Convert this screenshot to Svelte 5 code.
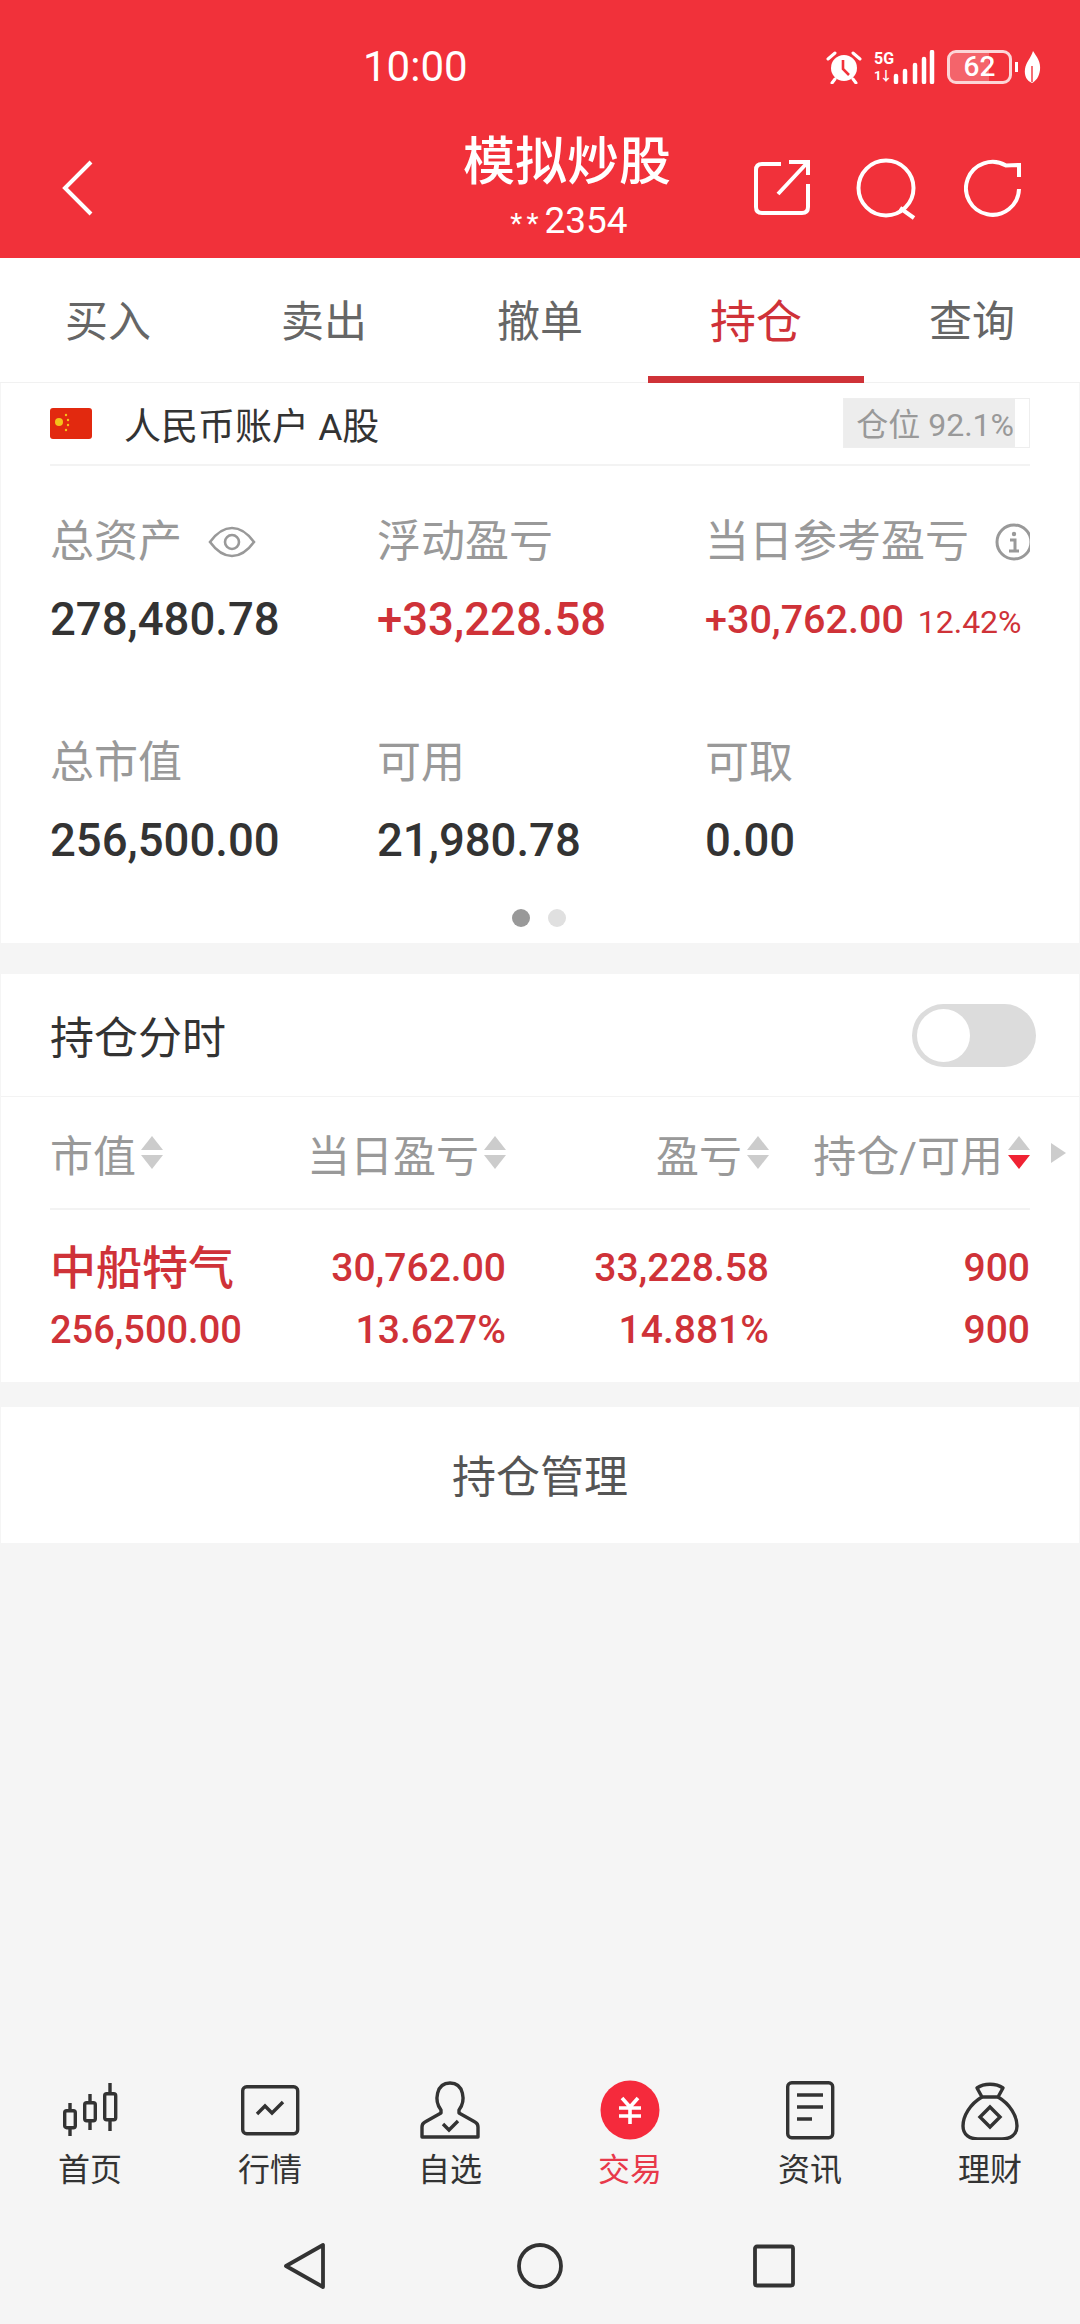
<script lang="ts">
  const tabs = ['买入', '卖出', '撤单', '持仓', '查询'];
  const activeTab = '持仓';
  const summary = [
    { label: '总资产', value: '278,480.78', eye: true },
    { label: '浮动盈亏', value: '+33,228.58', red: true },
    { label: '当日参考盈亏', value: '+30,762.00', extra: '12.42%', red: true, info: true, small: true },
    { label: '总市值', value: '256,500.00' },
    { label: '可用', value: '21,980.78' },
    { label: '可取', value: '0.00' },
  ];
  const columns = [
    { label: '市值', align: 'left' },
    { label: '当日盈亏', align: 'right' },
    { label: '盈亏', align: 'right' },
    { label: '持仓/可用', align: 'right', sorted: true },
  ];
  const nav = ['首页', '行情', '自选', '交易', '资讯', '理财'];
  const activeNav = '交易';
</script>

<div class="page">
  <header class="top">
    <div class="status">
      <span class="time">10:00</span>
      <div class="status-icons">
        <svg class="alarm" width="36" height="34" viewBox="0 0 36 34">
          <circle cx="18" cy="18" r="13" fill="#fff" />
          <path d="M17 10v9l6 6" fill="none" stroke="#f1313a" stroke-width="2.6" />
          <path d="M2 9l7-6M34 9l-7-6M9 29l-3 4M27 29l3 4" stroke="#fff" stroke-width="3" stroke-linecap="round" />
        </svg>
        <div class="net">
          <span class="net-5g">5G</span>
          <span class="net-arrows">1↓</span>
        </div>
        <svg class="bars" width="42" height="34" viewBox="0 0 42 34">
          <path d="M3 26v6M12 21v11M22 15v17M31 9v23M39 2v30" stroke="#fff" stroke-width="4.5" stroke-linecap="round" />
        </svg>
        <div class="battery">
          <div class="battery-fill"></div>
          <span>62</span>
        </div>
        <div class="battery-tip"></div>
        <svg class="leaf" width="17" height="32" viewBox="0 0 17 32">
          <path d="M9 0C13 6 17 11 16 19C15 26 12 30 8 32C3 30 0 25 1 18C2 11 7 7 9 0Z" fill="#fff" />
          <path d="M8 31L8 15" stroke="#f1313a" stroke-width="1.4" />
        </svg>
      </div>
    </div>
    <div class="titlebar">
      <svg class="back" width="31" height="56" viewBox="0 0 31 56">
        <path d="M29 2L3 28L29 54" fill="none" stroke="#fff" stroke-width="4" />
      </svg>
      <div class="title">
        <div class="title-main">模拟炒股</div>
        <div class="title-sub"><span class="stars">**</span>2354</div>
      </div>
      <svg class="act" width="56" height="58" viewBox="0 0 56 58">
        <path d="M27 5H8Q2 5 2 11V48Q2 54 8 54H48Q54 54 54 48V25" fill="none" stroke="#fff" stroke-width="4" />
        <path d="M24 35L53 4M35 3H54V16" fill="none" stroke="#fff" stroke-width="4" />
      </svg>
      <svg class="act search" width="62" height="62" viewBox="0 0 62 62">
        <circle cx="31" cy="30" r="27.5" fill="none" stroke="#fff" stroke-width="4" />
        <path d="M45 50L59 60" stroke="#fff" stroke-width="4" />
      </svg>
      <svg class="act refresh" width="58" height="60" viewBox="0 0 58 60">
        <path d="M55 30A26.5 26.5 0 1 1 42 6.500L55 6V18" fill="none" stroke="#fff" stroke-width="4" />
      </svg>
    </div>
  </header>

  <nav class="tabs">
    {#each tabs as tab}
      <div class="tab" class:active={tab === activeTab}>{tab}</div>
    {/each}
  </nav>

  <section class="card account-card">
    <div class="account">
      <svg width="42" height="31" viewBox="0 0 42 31">
        <rect width="42" height="31" rx="3" fill="#e2290f" />
        <circle cx="9" cy="14" r="4" fill="#f5c21a" />
        <circle cx="16" cy="7" r="1.2" fill="#f5c21a" />
        <circle cx="18" cy="12" r="1.2" fill="#f5c21a" />
        <circle cx="18" cy="17" r="1.2" fill="#f5c21a" />
        <circle cx="16" cy="22" r="1.2" fill="#f5c21a" />
      </svg>
      <span class="account-name">人民币账户 A股</span>
      <div class="position">
        <div class="position-fill">仓位 92.1%</div>
      </div>
    </div>
    <div class="stats">
      {#each summary as s}
        <div class="stat">
          <div class="stat-label">
            {s.label}
            {#if s.eye}
              <svg class="eye" width="48" height="36" viewBox="0 0 48 36">
                <path d="M2 18C10 7 17 4 24 4S38 7 46 18C38 29 31 32 24 32S10 29 2 18Z" fill="none" stroke="#999" stroke-width="2.6" />
                <circle cx="24" cy="18" r="7" fill="none" stroke="#999" stroke-width="2.6" />
              </svg>
            {/if}
            {#if s.info}
              <svg class="info" width="38" height="40" viewBox="0 0 38 40">
                <circle cx="19" cy="20" r="17" fill="none" stroke="#999" stroke-width="3" />
                <circle cx="19" cy="12" r="2.2" fill="#999" />
                <path d="M15 18h5v11M14 29h10" fill="none" stroke="#999" stroke-width="3" />
              </svg>
            {/if}
          </div>
          <div class="stat-value" class:red={s.red} class:small={s.small}>
            {s.value}
            {#if s.extra}<span class="stat-extra">{s.extra}</span>{/if}
          </div>
        </div>
      {/each}
    </div>
    <div class="dots">
      <i class="dot on"></i>
      <i class="dot"></i>
    </div>
  </section>

  <section class="card holdings">
    <div class="timeshare">
      <span>持仓分时</span>
      <div class="toggle"><div class="knob"></div></div>
    </div>
    <div class="table">
      <div class="thead">
        {#each columns as c}
          <div class="th" class:end={c.align === 'right'}>
            {c.label}
            <span class="sort">
              <i class="up"></i>
              <i class="down" class:hot={c.sorted}></i>
            </span>
          </div>
        {/each}
        <i class="more"></i>
      </div>
      <div class="row">
        <div class="cell-name">
          <div class="stock">中船特气</div>
          <div class="mktval">256,500.00</div>
        </div>
        <div class="cell"><div>30,762.00</div><div>13.627%</div></div>
        <div class="cell"><div>33,228.58</div><div>14.881%</div></div>
        <div class="cell"><div>900</div><div>900</div></div>
      </div>
    </div>
  </section>

  <div class="card manage">持仓管理</div>

  <div class="spacer"></div>

  <footer class="bottom">
    <div class="nav">
      {#each nav as item}
        <div class="nav-item" class:active={item === activeNav}>
          <svg width="60" height="60" viewBox="0 0 60 60" fill="none" stroke="#333" stroke-width="3.4">
            {#if item === '首页'}
              <rect x="4.7" y="30.7" width="10.6" height="17" rx="2" />
              <path d="M10 23V30M10 48V56" />
              <rect x="24.7" y="22.7" width="10.6" height="18" rx="2" />
              <path d="M30 14V22M30 41V50" />
              <rect x="44.7" y="13.7" width="11" height="26" rx="2" />
              <path d="M50 3V13M50 40V51" />
            {:else if item === '行情'}
              <rect x="2.7" y="6.7" width="55" height="47" rx="4" />
              <path d="M17 34L25 26L32 33L43 22" />
            {:else if item === '自选'}
              <path d="M21 30C14 21 16 3 30 3C44 3 46 21 39 30V33L55 42C57 43 58 45 58 47V57H2V47C2 45 3 43 5 42L21 33Z" stroke-linejoin="round" />
              <path d="M23 44L29 50L38 41" />
            {:else if item === '交易'}
              <circle cx="30" cy="30" r="29.5" fill="#f52a3c" stroke="none" />
              <path d="M22 18L30 27L38 18M19 28H41M19 36H41M30 27V44" stroke="#fff" stroke-width="3.6" />
            {:else if item === '资讯'}
              <rect x="7.7" y="2.7" width="45" height="55" rx="4" />
              <path d="M17 15H43M17 27H43M17 39H32" />
            {:else}
              <path d="M22 17L17 8C24 3 36 3 43 8L38 17Z" stroke-linejoin="round" />
              <path d="M22 17C10 24 3 36 3 46C3 55 10 59 18 59H42C50 59 57 55 57 46C57 36 50 24 38 17" />
              <path d="M30 27L40 37L30 47L20 37Z" />
            {/if}
          </svg>
          <span class="nav-label">{item}</span>
        </div>
      {/each}
    </div>
    <div class="sysnav">
      <svg width="44" height="48" viewBox="0 0 44 48">
        <path d="M40 3V45L3 24Z" fill="none" stroke="#333" stroke-width="3.8" stroke-linejoin="round" />
      </svg>
      <svg width="48" height="48" viewBox="0 0 48 48">
        <circle cx="25" cy="24" r="21" fill="none" stroke="#333" stroke-width="3.8" />
      </svg>
      <svg width="44" height="44" viewBox="0 0 44 44">
        <rect x="4" y="2.500" width="38" height="39" rx="2" fill="none" stroke="#333" stroke-width="3.8" />
      </svg>
    </div>
  </footer>
</div>

<style>
  :global(body) {
    margin: 0;
    background: #f5f5f5;
  }
  .page {
    width: 1080px;
    height: 2324px;
    display: flex;
    flex-direction: column;
    background: #f5f5f5;
    font-family: Roboto, "Noto Sans CJK SC", sans-serif;
    color: #333;
    overflow: hidden;
  }
  .top {
    height: 258px;
    background: #f1313a;
    color: #fff;
  }
  .status {
    height: 133px;
    display: flex;
    align-items: center;
    padding: 0 39px 0 363px;
  }
  .time {
    font-size: 42px;
    line-height: 1;
  }
  .status-icons {
    margin-left: auto;
    display: flex;
    align-items: center;
  }
  .net {
    width: 19px;
    margin-left: 12px;
    display: flex;
    flex-direction: column;
    font-size: 16px;
    font-weight: 700;
    line-height: 17px;
  }
  .net-arrows {
    font-size: 13px;
    letter-spacing: -2px;
  }
  .battery {
    position: relative;
    width: 65px;
    height: 34px;
    margin-left: 12px;
    box-sizing: border-box;
    border: 3px solid rgba(255, 255, 255, 0.8);
    border-radius: 9px;
    overflow: hidden;
    font-size: 28px;
    font-weight: 500;
    line-height: 28px;
    text-align: center;
  }
  .battery span {
    position: relative;
  }
  .battery-fill {
    position: absolute;
    inset: 0 20px 0 0;
    background: rgba(255, 255, 255, 0.25);
  }
  .battery-tip {
    width: 3px;
    height: 10px;
    margin-left: 3px;
    background: #fff;
  }
  .leaf {
    margin-left: 6px;
  }
  .titlebar {
    display: flex;
    align-items: flex-start;
    padding-left: 62px;
  }
  .back {
    margin-top: 27px;
  }
  .title {
    width: 208px;
    margin-left: 370px;
    margin-right: 83px;
    text-align: center;
  }
  .title-main {
    font-size: 52px;
    font-weight: 500;
    line-height: 60px;
    white-space: nowrap;
  }
  .title-sub {
    margin-top: 10px;
    padding-left: 4px;
    font-size: 37px;
    line-height: 36px;
    white-space: nowrap;
  }
  .stars {
    font-size: 28px;
    letter-spacing: 4px;
    margin-right: 2px;
  }
  .act {
    margin-top: 26px;
  }
  .search {
    margin-left: 45px;
    margin-top: 25px;
  }
  .refresh {
    margin-left: 47px;
  }
  .tabs {
    height: 125px;
    box-sizing: border-box;
    display: grid;
    grid-template-columns: repeat(5, 1fr);
    background: #fff;
    border-bottom: 1px solid #f1f1f1;
  }
  .tab {
    height: 125px;
    box-sizing: border-box;
    padding-top: 36px;
    text-align: center;
    font-size: 43px;
    line-height: 56px;
    color: #666;
  }
  .tab.active {
    color: #cf3238;
    border-bottom: 7px solid #cf3238;
    font-size: 46px;
  }
  .card {
    background: #fff;
    border-left: 1px solid #f5f5f5;
    border-right: 1px solid #f5f5f5;
  }
  .account-card {
    height: 560px;
    box-sizing: border-box;
    padding: 0 49px;
  }
  .account {
    height: 83px;
    box-sizing: border-box;
    display: flex;
    align-items: center;
    gap: 32px;
    border-bottom: 2px solid #f3f3f3;
  }
  .account-name {
    font-size: 37px;
    color: #333;
  }
  .position {
    margin-left: auto;
    width: 187px;
    height: 50px;
    box-sizing: border-box;
    margin-top: -1px;
    border: 1px solid #eee;
  }
  .position-fill {
    width: 171px;
    height: 48px;
    box-sizing: border-box;
    padding-right: 1px;
    background: #ededed;
    color: #999;
    font-size: 32px;
    line-height: 52px;
    text-align: right;
    white-space: nowrap;
  }
  .stats {
    display: grid;
    grid-template-columns: 327px 328px 325px;
    row-gap: 85px;
    padding-top: 48px;
  }
  .stat {
    overflow: hidden;
  }
  .stat-label {
    display: flex;
    align-items: center;
    height: 56px;
    font-size: 44px;
    line-height: 56px;
    color: #999;
    white-space: nowrap;
  }
  .eye {
    margin-left: 26px;
  }
  .info {
    margin-left: 26px;
    flex: none;
  }
  .stat-value {
    height: 60px;
    margin-top: 20px;
    font-size: 45.500px;
    font-weight: 500;
    line-height: 60px;
    color: #333;
    white-space: nowrap;
  }
  .stat-value.small {
    font-size: 39.500px;
  }
  .red {
    color: #cf3238 !important;
  }
  .stat-extra {
    margin-left: 4px;
    font-size: 32px;
    font-weight: 400;
  }
  .dots {
    display: flex;
    justify-content: center;
    gap: 18px;
    margin-top: 38px;
    padding-right: 2px;
  }
  .dot {
    width: 18px;
    height: 18px;
    border-radius: 50%;
    background: #e0e0e0;
  }
  .dot.on {
    background: #999;
  }
  .holdings {
    margin-top: 31px;
    height: 408px;
  }
  .timeshare {
    height: 123px;
    box-sizing: border-box;
    display: flex;
    align-items: center;
    justify-content: space-between;
    padding: 0 43px 0 49px;
    font-size: 44px;
    border-bottom: 1px solid #f3f3f3;
  }
  .toggle {
    width: 124px;
    height: 63px;
    border-radius: 32px;
    background: #dcdcdc;
    position: relative;
  }
  .knob {
    position: absolute;
    left: 5px;
    top: 5px;
    width: 53px;
    height: 53px;
    border-radius: 50%;
    background: #fff;
  }
  .table {
    padding: 0 49px;
  }
  .thead,
  .row {
    display: grid;
    grid-template-columns: 240px 216px 263px 261px;
  }
  .thead {
    position: relative;
    height: 113px;
    box-sizing: border-box;
    align-items: center;
    border-bottom: 2px solid #f3f3f3;
  }
  .th {
    display: flex;
    align-items: center;
    gap: 5px;
    font-size: 43px;
    color: #999;
    white-space: nowrap;
  }
  .th.end {
    justify-content: flex-end;
  }
  .sort {
    display: flex;
    flex-direction: column;
    gap: 5px;
  }
  .up,
  .down {
    width: 0;
    height: 0;
    border-left: 11px solid transparent;
    border-right: 11px solid transparent;
  }
  .up {
    border-bottom: 14px solid #ccc;
  }
  .down {
    border-top: 14px solid #ccc;
  }
  .down.hot {
    border-top-color: #f02233;
  }
  .more {
    position: absolute;
    right: -36px;
    top: 46px;
    width: 0;
    height: 0;
    border-left: 15px solid #ccc;
    border-top: 10px solid transparent;
    border-bottom: 10px solid transparent;
  }
  .row {
    font-size: 39px;
    font-weight: 500;
    color: #cf3238;
    line-height: 62px;
    padding-top: 27px;
  }
  .stock {
    font-size: 46px;
    white-space: nowrap;
  }
  .mktval {
    font-size: 38px;
  }
  .cell {
    text-align: right;
  }
  .manage {
    margin-top: 25px;
    height: 136px;
    font-size: 44px;
    line-height: 142px;
    text-align: center;
    color: #555;
  }
  .spacer {
    flex: 1;
  }
  .bottom {
    height: 244px;
  }
  .nav {
    display: grid;
    grid-template-columns: repeat(6, 180px);
  }
  .nav-item {
    display: flex;
    flex-direction: column;
    align-items: center;
  }
  .nav-label {
    margin-top: 8px;
    font-size: 32px;
    line-height: 44px;
    color: #333;
  }
  .nav-item.active .nav-label {
    color: #e8394a;
  }
  .sysnav {
    display: flex;
    align-items: center;
    margin-top: 50px;
    padding-left: 283px;
    gap: 188px;
  }
</style>
